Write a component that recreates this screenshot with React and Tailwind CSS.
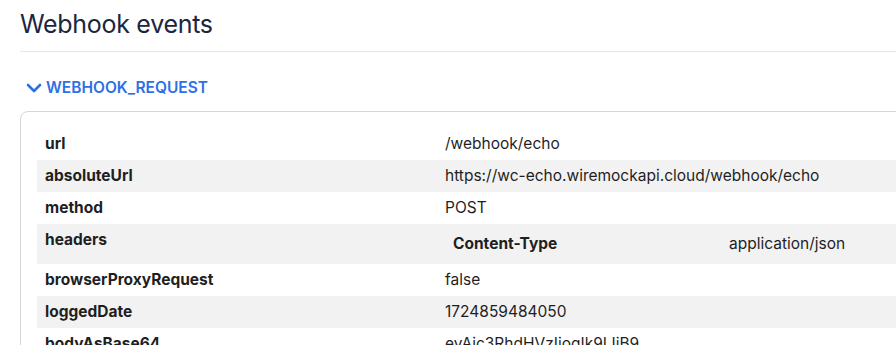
const rows = [
  { key: 'url', value: '/webhook/echo' },
  { key: 'absoluteUrl', value: 'https://wc-echo.wiremockapi.cloud/webhook/echo' },
  { key: 'method', value: 'POST' },
  { key: 'headers', headers: [['Content-Type', 'application/json']] },
  { key: 'browserProxyRequest', value: 'false' },
  { key: 'loggedDate', value: '1724859484050' },
  { key: 'bodyAsBase64', value: 'eyAic3RhdHVzIjogIk9LIiB9' },
];

export default function App() {
  return (
    <div className="min-h-screen bg-white pl-5 font-['Inter',sans-serif] overflow-hidden">
      <h1 className="pt-[7px] pb-[9px] text-[25px] leading-[35px] text-[#1b2640] border-b border-[#e6e6e6] tracking-[-0.3px]">
        Webhook events
      </h1>

      <div className="mt-[26px] flex items-center gap-[4px] pl-[6px] text-[#2f6fe6]">
        <svg width="16" height="10" viewBox="0 0 16 10" fill="none" stroke="currentColor" strokeWidth="2.6" strokeLinecap="round" strokeLinejoin="round">
          <polyline points="2,2 8,8 14,2" />
        </svg>
        <span className="text-[15.5px] font-semibold leading-5">WEBHOOK_REQUEST</span>
      </div>

      <div className="mt-[13px] w-[1000px] rounded-lg border border-[#d6d6d6] px-4 pt-4 pb-4">
        <table className="w-full border-collapse text-[15.5px] text-[#1f1f1f]">
          <tbody>
            {rows.map((row, i) => (
              <tr key={row.key} className={i % 2 === 1 ? 'bg-[#f2f2f2]' : ''}>
                <td className="w-[400px] px-2 py-1 align-top font-bold leading-6">{row.key}</td>
                <td className="px-2 py-1 align-top leading-6">
                  {row.headers ? (
                    <table className="w-full border-collapse">
                      <tbody>
                        {row.headers.map(([k, v]) => (
                          <tr key={k}>
                            <td className="w-[276px] px-2 py-1 font-bold leading-6">{k}</td>
                            <td className="px-2 py-1 leading-6">{v}</td>
                          </tr>
                        ))}
                      </tbody>
                    </table>
                  ) : (
                    row.value
                  )}
                </td>
              </tr>
            ))}
          </tbody>
        </table>
      </div>
    </div>
  );
}
